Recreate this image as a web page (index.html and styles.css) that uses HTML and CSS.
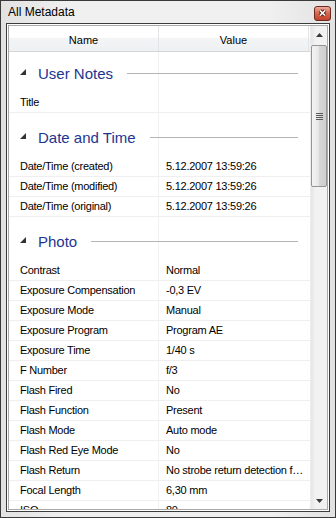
FILE: index.html
```html
<!DOCTYPE html>
<html lang="en">

<head>
    <meta charset="UTF-8">
    <title>All Metadata</title>
    <link rel="stylesheet" href="styles.css">
</head>

<body>
    <div class="window">
        <div class="titlebar">
            <span class="title">All Metadata</span>
            <span class="close">
                <svg width="17" height="15" viewBox="0 0 17 15">
                    <defs>
                        <linearGradient id="cg" x1="0" y1="0" x2="0" y2="1">
                            <stop offset="0" stop-color="#ecb4a6" />
                            <stop offset="0.45" stop-color="#d86a52" />
                            <stop offset="1" stop-color="#c1402a" />
                        </linearGradient>
                    </defs>
                    <rect x="0.5" y="0.5" width="16" height="14" rx="2.5" fill="url(#cg)" stroke="#6e2a20" />
                    <path d="M6 4.5 L11 9.5 M11 4.5 L6 9.5" stroke="#4a1c14" stroke-width="3.4" />
                    <path d="M6 4.5 L11 9.5 M11 4.5 L6 9.5" stroke="#fff" stroke-width="1.7" />
                </svg>
            </span>
        </div>
        <div class="content">
            <div class="list">
                <div class="main">
                    <div class="header">
                        <div class="hcol name">Name</div>
                        <div class="hcol value">Value</div>
                        <div class="hcol rest"></div>
                    </div>
                    <div class="body">
                        <div class="group first">
                            <svg class="tri" width="6" height="6" viewBox="0 0 6 6"><polygon points="6,0 6,6 0,6" /></svg>
                            <span class="group-title">User Notes</span>
                            <span class="group-line"></span>
                        </div>
                        <div class="row"><div class="cell name">Title</div><div class="cell value"></div></div>

                        <div class="group">
                            <svg class="tri" width="6" height="6" viewBox="0 0 6 6"><polygon points="6,0 6,6 0,6" /></svg>
                            <span class="group-title">Date and Time</span>
                            <span class="group-line"></span>
                        </div>
                        <div class="row"><div class="cell name">Date/Time (created)</div><div class="cell value">5.12.2007 13:59:26</div></div>
                        <div class="row"><div class="cell name">Date/Time (modified)</div><div class="cell value">5.12.2007 13:59:26</div></div>
                        <div class="row"><div class="cell name">Date/Time (original)</div><div class="cell value">5.12.2007 13:59:26</div></div>

                        <div class="group">
                            <svg class="tri" width="6" height="6" viewBox="0 0 6 6"><polygon points="6,0 6,6 0,6" /></svg>
                            <span class="group-title">Photo</span>
                            <span class="group-line"></span>
                        </div>
                        <div class="row"><div class="cell name">Contrast</div><div class="cell value">Normal</div></div>
                        <div class="row"><div class="cell name">Exposure Compensation</div><div class="cell value">-0,3 EV</div></div>
                        <div class="row"><div class="cell name">Exposure Mode</div><div class="cell value">Manual</div></div>
                        <div class="row"><div class="cell name">Exposure Program</div><div class="cell value">Program AE</div></div>
                        <div class="row"><div class="cell name">Exposure Time</div><div class="cell value">1/40 s</div></div>
                        <div class="row"><div class="cell name">F Number</div><div class="cell value">f/3</div></div>
                        <div class="row"><div class="cell name">Flash Fired</div><div class="cell value">No</div></div>
                        <div class="row"><div class="cell name">Flash Function</div><div class="cell value">Present</div></div>
                        <div class="row"><div class="cell name">Flash Mode</div><div class="cell value">Auto mode</div></div>
                        <div class="row"><div class="cell name">Flash Red Eye Mode</div><div class="cell value">No</div></div>
                        <div class="row"><div class="cell name">Flash Return</div><div class="cell value">No strobe return detection function</div></div>
                        <div class="row"><div class="cell name">Focal Length</div><div class="cell value">6,30 mm</div></div>
                        <div class="row"><div class="cell name">ISO</div><div class="cell value">80</div></div>
                    </div>
                </div>
                <div class="scrollbar">
                    <div class="sb-btn">
                        <svg width="7" height="4" viewBox="0 0 7 4"><polygon points="3.5,0 7,4 0,4" /></svg>
                    </div>
                    <div class="thumb">
                        <svg width="7" height="7" viewBox="0 0 7 7">
                            <path d="M0 0.5H7M0 2.5H7M0 4.5H7M0 6.5H7" stroke="#5a5a5a" stroke-width="1" />
                        </svg>
                    </div>
                    <div class="sb-track"></div>
                    <div class="sb-btn">
                        <svg width="7" height="4" viewBox="0 0 7 4"><polygon points="0,0 7,0 3.5,4" /></svg>
                    </div>
                </div>
            </div>
        </div>
    </div>
</body>

</html>
```

FILE: styles.css
```css
* {
    margin: 0;
    padding: 0;
    box-sizing: border-box;
}

body {
    width: 336px;
    height: 518px;
    overflow: hidden;
    font-family: "Liberation Sans", Arial, sans-serif;
    font-size: 11px;
    color: #000;
}

.window {
    height: 518px;
    border: 1px solid #3a3a3a;
    background: linear-gradient(to right, #e2e2e2, #f0f0f0 20%, #f0f0f0 80%, #e2e2e2);
    display: flex;
    flex-direction: column;
}

.titlebar {
    height: 22px;
    flex: none;
    display: flex;
    align-items: center;
    justify-content: space-between;
    padding: 0 4px 0 7px;
}

.title {
    font-size: 12px;
}

.close {
    display: block;
    height: 15px;
    margin-top: 3px;
}

.close svg {
    display: block;
}

.content {
    flex: 1;
    margin: 0 5px 5px;
    border: 1px solid #3c3c3c;
    background: #fff;
    padding: 1px;
    min-height: 0;
}

.list {
    height: 100%;
    border: 1px solid #a9a9a9;
    display: flex;
    overflow: hidden;
}

.main {
    flex: 1;
    min-width: 0;
    display: flex;
    flex-direction: column;
    overflow: hidden;
}

.header {
    height: 26px;
    flex: none;
    display: flex;
    border-bottom: 1px solid #d5d5d5;
    background: linear-gradient(#ffffff, #ffffff 45%, #f3f4f6 50%, #eff0f2);
}

.hcol {
    padding-top: 3px;
    line-height: 22px;
    text-align: center;
    border-right: 1px solid #e2e4e7;
}

.hcol.name {
    width: 150px;
}

.hcol.value {
    width: 150px;
}

.hcol.rest {
    flex: 1;
    border-right: none;
}

.body {
    flex: 1;
    background: linear-gradient(to right, transparent 149px, #f0f0f0 149px, #f0f0f0 150px, transparent 150px);
}

.group {
    height: 44px;
    padding: 4px 12px 0 11px;
    display: flex;
    align-items: center;
}

.group.first {
    height: 41px;
    padding-top: 1px;
}

.tri {
    flex: none;
    fill: #333;
    margin: -2px 12px 0 0;
}

.group-title {
    font-size: 15px;
    color: #1e3590;
    white-space: nowrap;
}

.group-line {
    flex: 1;
    height: 1px;
    margin-left: 14px;
    background: #b4b4b4;
}

.row {
    height: 20px;
    display: flex;
    border-bottom: 1px solid #efefef;
    line-height: 19px;
    letter-spacing: -0.25px;
}

.cell {
    white-space: nowrap;
    overflow: hidden;
    text-overflow: ellipsis;
}

.cell.name {
    width: 150px;
    flex: none;
    padding-left: 11px;
}

.cell.value {
    width: 150px;
    flex: none;
    padding: 0 1px 0 7px;
}

.scrollbar {
    width: 17px;
    flex: none;
    display: flex;
    flex-direction: column;
    background: linear-gradient(to right, #e6e6e6, #f2f2f2 30%, #f2f2f2);
    border-left: 1px solid #ececec;
}

.sb-btn {
    height: 17px;
    flex: none;
    display: flex;
    align-items: center;
    justify-content: center;
}

.sb-btn svg {
    fill: #3a3a3a;
}

.thumb {
    height: 142px;
    flex: none;
    margin: 2px 0 0 0;
    border: 1px solid #959595;
    border-radius: 2px;
    background: linear-gradient(to right, #f4f4f4, #e8e8e8 45%, #d6d6d6 55%, #cfcfcf);
    display: flex;
    align-items: center;
    justify-content: center;
}

.sb-track {
    flex: 1;
}
```
